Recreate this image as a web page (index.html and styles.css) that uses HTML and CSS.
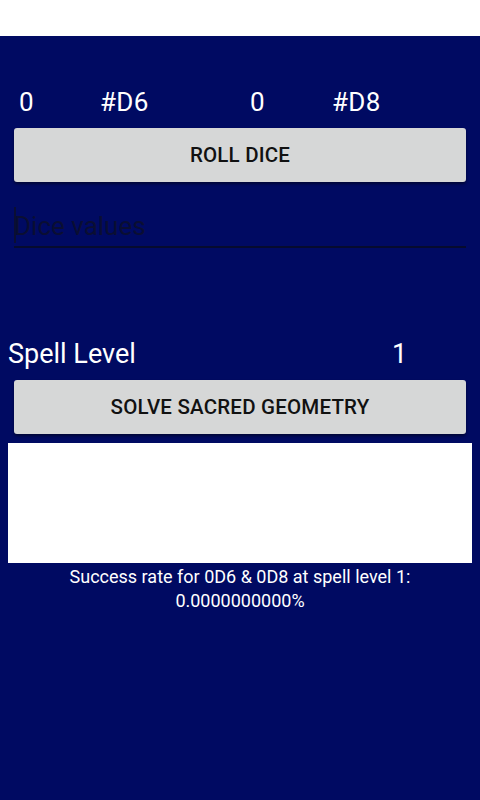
FILE: index.html
```html
<!DOCTYPE html>
<html>
<head>
<meta charset="utf-8">
<link rel="stylesheet" href="styles.css">
</head>
<body>
<div class="status"></div>
<main class="app">
  <div class="dice-row">
    <span class="num n1">0</span>
    <span class="die d1">#D6</span>
    <span class="num n2">0</span>
    <span class="die d2">#D8</span>
  </div>
  <button class="btn">ROLL DICE</button>
  <div class="field">
    <span class="cursor"></span>
    <span class="hint">Dice values</span>
  </div>
  <div class="spell-row">
    <span class="spell-label">Spell Level</span>
    <span class="spell-val">1</span>
  </div>
  <button class="btn btn2">SOLVE SACRED GEOMETRY</button>
  <div class="result"></div>
  <p class="rate">Success rate for 0D6 &amp; 0D8 at spell level 1:<br>0.0000000000%</p>
</main>
</body>
</html>
```
FILE: styles.css
```css
* { box-sizing: border-box; }
html, body { margin: 0; padding: 0; }
body {
  width: 480px;
  height: 800px;
  background: #000a62;
  font-family: Roboto, "Noto Sans", sans-serif;
  overflow: hidden;
}
.status { height: 36px; background: #ffffff; }
.app { padding: 0 8px; }
.dice-row {
  display: flex;
  height: 92px;
  padding-top: 50px;
  color: #ffffff;
  font-size: 26px;
  line-height: 32px;
  letter-spacing: 0.3px;
}
.n1 { margin-left: 11px; width: 81px; }
.d1 { width: 150px; }
.n2 { width: 82px; }
.btn {
  display: block;
  width: 452px;
  height: 54px;
  margin: 0 6px;
  padding: 0;
  border: none;
  border-radius: 3px;
  background: #d6d7d7;
  box-shadow: 0 2px 3px rgba(0,0,0,0.45);
  color: #111;
  font-family: Roboto, sans-serif;
  font-weight: 500;
  font-size: 20.5px;
  letter-spacing: 0.2px;
}
.field {
  position: relative;
  margin: 18px 6px 0;
  height: 48px;
  border-bottom: 2px solid #060b2e;
}
.hint {
  display: block;
  padding-top: 10px;
  font-size: 26px;
  line-height: 32px;
  color: #0a0e33;
}
.cursor {
  position: absolute;
  left: 0;
  top: 7px;
  width: 2px;
  height: 36px;
  background: #0a0e33;
}
.spell-row {
  display: flex;
  margin-top: 86px;
  height: 40px;
  line-height: 40px;
  color: #fff;
  font-size: 27px;
}
.spell-label { width: 384px; }
.btn2 { margin-top: 6px; }
.result {
  margin-top: 9px;
  height: 120px;
  background: #ffffff;
}
.rate {
  margin: 2px 0 0;
  text-align: center;
  color: #fff;
  font-size: 18px;
  line-height: 24px;
}
```
